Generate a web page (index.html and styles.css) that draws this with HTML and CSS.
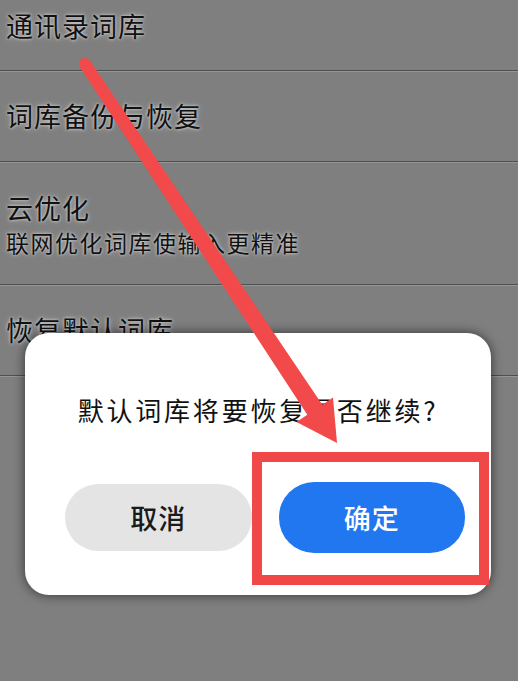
FILE: index.html
```html
<!DOCTYPE html>
<html lang="zh-CN">
<head>
<meta charset="utf-8">
<title>词库设置</title>
<link rel="stylesheet" href="styles.css">
</head>
<body>
<div class="screen">
  <ul class="list">
    <li class="row row-first"><span class="title">通讯录词库</span></li>
    <li class="row row-mid"><span class="title">词库备份与恢复</span></li>
    <li class="row row-tall"><span class="title">云优化</span><span class="sub">联网优化词库使输入更精准</span></li>
    <li class="row row-mid"><span class="title">恢复默认词库</span></li>
  </ul>

  <div class="dialog">
    <p class="message">默认词库将要恢复是否继续?</p>
    <div class="actions">
      <button class="btn btn-cancel">取消</button>
      <button class="btn btn-ok">确定</button>
    </div>
  </div>

  <div class="highlight"></div>

  <svg class="arrow" width="518" height="681" viewBox="0 0 518 681" aria-hidden="true">
    <circle cx="85" cy="64" r="6" fill="#f24a4a"/>
    <polygon fill="#f24a4a" points="90,60.7 322.3,404.7 333,397.5 337,443 296.5,421.9 307.3,414.7 80,67.3"/>
  </svg>
</div>
</body>
</html>
```

FILE: styles.css
```css
html, body {
  margin: 0;
  padding: 0;
}

body {
  background: #7f7f7f;
  font-family: "Noto Sans CJK SC", "Noto Sans", sans-serif;
}

.screen {
  position: relative;
  width: 518px;
  height: 681px;
  overflow: hidden;
  background: #7f7f7f;
}

.list {
  list-style: none;
  margin: 0;
  padding: 0;
}

.row {
  box-sizing: border-box;
  display: flex;
  flex-direction: column;
  justify-content: center;
  padding-left: 6px;
  border-bottom: 1px solid #4f4f4f;
  box-shadow: 0 1px 0 #959595;
  color: #111;
  text-shadow: 0 0 3px rgba(255, 255, 255, 0.75), 0 0 6px rgba(255, 255, 255, 0.35);
}

.row-first {
  height: 90px;
  margin-top: -19px;
}

.row-mid {
  height: 91px;
}

.row-tall {
  height: 123px;
  padding-top: 4px;
}

.title {
  font-size: 27px;
  letter-spacing: 1px;
  line-height: 34px;
}

.sub {
  font-size: 23px;
  letter-spacing: 1.5px;
  line-height: 34px;
}

.dialog {
  position: absolute;
  left: 25px;
  top: 333px;
  width: 466px;
  height: 262px;
  box-sizing: border-box;
  padding: 0 26px 0 40px;
  background: #ffffff;
  border-radius: 24px;
  box-shadow: 0 0 12px rgba(0, 0, 0, 0.6);
  display: flex;
  flex-direction: column;
}

.message {
  margin: 59px 0 0 -14px;
  text-align: center;
  font-size: 26px;
  line-height: 36px;
  letter-spacing: 2.8px;
  color: #111;
}

.actions {
  display: flex;
  gap: 27px;
  margin-top: 54px;
}

.btn {
  flex: 1;
  height: 70px;
  border: none;
  border-radius: 35px;
  font-family: "Noto Sans CJK SC", "Noto Sans", sans-serif;
  font-size: 27px;
  font-weight: 500;
  letter-spacing: 1px;
  padding: 0;
}

.btn-cancel {
  background: #e4e4e4;
  color: #1a1a1a;
  margin-top: 2px;
  height: 67px;
}

.btn-ok {
  background: #2177ef;
  color: #ffffff;
  height: 71px;
}

.highlight {
  position: absolute;
  left: 252px;
  top: 452px;
  width: 237px;
  height: 133px;
  box-sizing: border-box;
  border: 10px solid #f04848;
}

.arrow {
  position: absolute;
  left: 0;
  top: 0;
  pointer-events: none;
}
```
